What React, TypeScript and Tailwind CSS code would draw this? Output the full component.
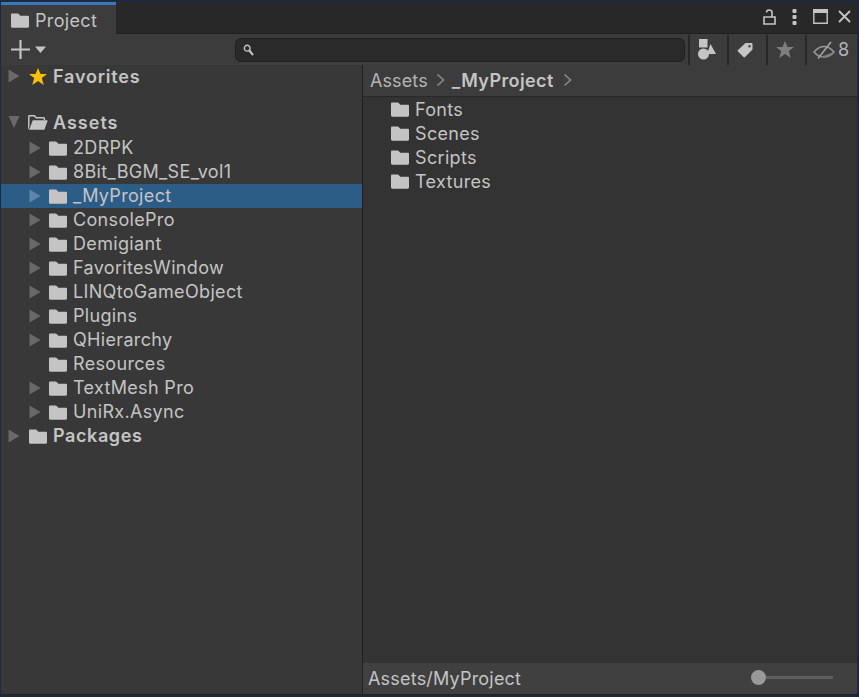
import { ReactNode } from "react"

const FolderIcon = ({ className = "" }: { className?: string }) => (
  <svg viewBox="0 0 18 15" className={`h-[15px] w-[18px] shrink-0 ${className}`}>
    <path
      d="M1.200 0.500H6.600C7.200 0.500 7.600 0.800 8 1.300L9.200 2.800H16.800C17.500 2.800 18 3.300 18 4V13.600C18 14.300 17.500 14.800 16.800 14.800H1.200C0.500 14.800 0 14.300 0 13.600V1.700C0 1 0.500 0.500 1.200 0.500Z"
      fill="#c4c4c4"
    />
  </svg>
)

const OpenFolderIcon = () => (
  <svg viewBox="0 0 20 15" className="h-[15px] w-[20px] shrink-0">
    <path
      d="M0.800 14V1.600C0.800 1 1.200 0.700 1.700 0.700H6.400L8.200 2.700H15.500C16 2.700 16.400 3 16.400 3.600V5"
      fill="none"
      stroke="#c4c4c4"
      strokeWidth="1.500"
    />
    <path d="M4.400 5.200H19.800L16.400 14.800H0.800Z" fill="#c4c4c4" />
    <path d="M1 14L4.400 5.200" stroke="#383838" strokeWidth="0.800" />
  </svg>
)

const Arrow = ({ down = false, selected = false }: { down?: boolean; selected?: boolean }) => (
  <svg viewBox="0 0 12 14" className="h-[14px] w-[12px] shrink-0">
    {down ? (
      <path d="M0.500 1H11.500L6 13Z" fill="#696969" />
    ) : (
      <path d="M0.500 0.500L11.500 7L0.500 13.500Z" fill={selected ? "#5f86a8" : "#696969"} />
    )}
  </svg>
)

const Chevron = () => (
  <svg viewBox="0 0 10 14" className="h-[14px] w-[10px] shrink-0">
    <path d="M1.500 1.500L7.500 7L1.500 12.500" fill="none" stroke="#8a8a8a" strokeWidth="1.600" />
  </svg>
)

const ToolButton = ({ children, className = "" }: { children: ReactNode; className?: string }) => (
  <div className={`flex h-[30px] items-center border-l-2 border-[#282828] ${className}`}>
    {children}
  </div>
)

const children = [
  { name: "2DRPK", arrow: true },
  { name: "8Bit_BGM_SE_vol1", arrow: true },
  { name: "_MyProject", arrow: true, selected: true },
  { name: "ConsolePro", arrow: true },
  { name: "Demigiant", arrow: true },
  { name: "FavoritesWindow", arrow: true },
  { name: "LINQtoGameObject", arrow: true },
  { name: "Plugins", arrow: true },
  { name: "QHierarchy", arrow: true },
  { name: "Resources", arrow: false },
  { name: "TextMesh Pro", arrow: true },
  { name: "UniRx.Async", arrow: true }
]

export default function App() {
  return (
    <div
      className="flex h-[697px] w-[859px] flex-col overflow-hidden bg-[#1c2a40] pt-[2px] pr-[2px] pb-[2px] pl-[1px] text-[18px] tracking-[0.33px] text-[#c4c4c4]"
      style={{ fontFamily: "Inter, sans-serif" }}>
      {/* Tab strip */}
      <div className="flex h-[32px] shrink-0 items-stretch justify-between border-b border-[#1f1f1f] bg-[#282828]">
        <div className="-mb-px flex w-[115px] items-center gap-[6px] border-t-[3px] border-[#3c78bd] bg-[#3c3c3c] pt-[2px] pl-[10px]">
          <FolderIcon />
          <span className="leading-none">Project</span>
        </div>
        <div className="flex items-center pr-[6px] pb-[2px]">
          <svg viewBox="0 0 13 16" className="h-[16px] w-[13px]">
            <path d="M1 8H12V15H1Z" fill="none" stroke="#c4c4c4" strokeWidth="1.600" />
            <path d="M3.500 3.500C3.500 1.800 4.800 1 6.200 1C7.700 1 9 1.800 9 3.500V8" fill="none" stroke="#c4c4c4" strokeWidth="1.600" />
          </svg>
          <svg viewBox="0 0 5 16" className="ml-[16px] h-[16px] w-[5px]">
            <rect x="0.500" y="0" width="4" height="4" rx="1" fill="#c4c4c4" />
            <rect x="0.500" y="6" width="4" height="4" rx="1" fill="#c4c4c4" />
            <rect x="0.500" y="12" width="4" height="4" rx="1" fill="#c4c4c4" />
          </svg>
          <svg viewBox="0 0 15 15" className="ml-[16px] h-[15px] w-[15px]">
            <path d="M0.800 0.800H14.200V14.200H0.800Z" fill="none" stroke="#c4c4c4" strokeWidth="1.400" />
            <rect x="0" y="0" width="15" height="4" fill="#c4c4c4" />
          </svg>
          <svg viewBox="0 0 13 13" className="ml-[10px] h-[13px] w-[13px]">
            <path d="M1 1L12 12M12 1L1 12" fill="none" stroke="#c4c4c4" strokeWidth="1.800" />
          </svg>
        </div>
      </div>

      {/* Toolbar */}
      <div className="flex h-[31px] shrink-0 items-center bg-[#3c3c3c]">
        <div className="flex w-[234px] items-center gap-[5px] pl-[10px]">
          <svg viewBox="0 0 19 19" className="h-[19px] w-[19px]">
            <path d="M9.500 0V19M0 9.500H19" stroke="#c4c4c4" strokeWidth="2.200" />
          </svg>
          <svg viewBox="0 0 11 7" className="h-[7px] w-[11px]">
            <path d="M0 0.500H11L5.500 7Z" fill="#c4c4c4" />
          </svg>
        </div>
        <div className="flex h-[24px] w-[451px] items-center rounded-[6px] border border-[#212121] bg-[#2a2a2a] pl-[7px]">
          <svg viewBox="0 0 11 12" className="h-[12px] w-[11px]">
            <circle cx="4.200" cy="4.200" r="2.900" fill="none" stroke="#c4c4c4" strokeWidth="1.400" />
            <path d="M6.300 6.500L10 11" stroke="#c4c4c4" strokeWidth="2" />
          </svg>
        </div>
        <ToolButton className="ml-[3px] w-[39px] pl-[8px]">
          <svg viewBox="0 0 18 21" className="h-[21px] w-[18px]">
            <rect x="1" y="0" width="8.500" height="8.500" fill="#c4c4c4" />
            <path d="M12.500 5L18 15H10L9.500 13.500Z" fill="#c4c4c4" />
            <circle cx="5.500" cy="15" r="5.500" fill="#c4c4c4" />
          </svg>
        </ToolButton>
        <ToolButton className="w-[39px] pl-[8px]">
          <svg viewBox="0 0 16 16" className="h-[16px] w-[16px]">
            <path
              fillRule="evenodd"
              d="M8.500 1H14.500C15 1 15.500 1.500 15.500 2V7.500L8 15C7.500 15.500 7 15.500 6.500 15L1 9.500C0.500 9 0.500 8.500 1 8ZM12.500 3A1.200 1.200 0 1 0 12.500 5.400A1.200 1.200 0 1 0 12.500 3Z"
              fill="#c4c4c4"
            />
          </svg>
        </ToolButton>
        <ToolButton className="w-[39px] pl-[8px]">
          <svg viewBox="0 0 18 17" className="h-[17px] w-[18px]">
            <path d="M9 0L11.500 6H18L12.800 10L14.700 17L9 13L3.300 17L5.200 10L0 6H6.500Z" fill="#7e7e7e" />
          </svg>
        </ToolButton>
        <ToolButton className="w-[52px] pl-[6px]">
          <svg viewBox="0 0 22 18" className="h-[18px] w-[22px]">
            <path d="M1 11C4 7.500 7 5.500 11 5.500C15 5.500 18 7.500 21 11C18 14.500 15 16 11 16C7 16 4 14.500 1 11Z" fill="none" stroke="#9a9a9a" strokeWidth="1.500" />
            <path d="M7 16L21 11C18 14.500 15 16 11 16Z" fill="#7a7a7a" />
            <path d="M5 17.500L18 1" stroke="#a4a4a4" strokeWidth="1.600" />
          </svg>
          <span className="ml-[3px] text-[#b4b4b4]">8</span>
        </ToolButton>
      </div>

      {/* Panels */}
      <div className="flex min-h-0 flex-1 border-b border-[#232323]">
        {/* Tree */}
        <div className="w-[362px] shrink-0 border-r border-[#202020] bg-[#383838]">
          <div className="flex h-[22px] items-center pl-[7px]">
            <Arrow />
            <svg viewBox="0 0 18 17" className="ml-[9px] h-[17px] w-[18px]">
              <path d="M9 0L11.500 6H18L12.800 10L14.700 17L9 13L3.300 17L5.200 10L0 6H6.500Z" fill="#ffc107" />
            </svg>
            <span className="ml-[6px] font-semibold tracking-[0.8px]">Favorites</span>
          </div>
          <div className="mt-[23px] mb-[2px] flex h-[24px] items-center pl-[7px]">
            <Arrow down />
            <div className="ml-[8px]">
              <OpenFolderIcon />
            </div>
            <span className="ml-[5px] font-semibold tracking-[1px]">Assets</span>
          </div>
          {children.map((item) => (
            <div
              key={item.name}
              className={`flex h-[24px] items-center pl-[28px] ${item.selected ? "bg-[#2c5d87]" : ""}`}>
              <div className="flex w-[12px]">{item.arrow && <Arrow selected={item.selected} />}</div>
              <FolderIcon className="ml-[8px]" />
              <span className="mb-[2px] ml-[6px]">{item.name}</span>
            </div>
          ))}
          <div className="flex h-[24px] items-center pl-[7px]">
            <Arrow />
            <FolderIcon className="ml-[9px]" />
            <span className="mb-[2px] ml-[6px] font-semibold tracking-[0.6px]">Packages</span>
          </div>
        </div>

        {/* Content */}
        <div className="flex min-w-0 flex-1 flex-col bg-[#333333]">
          <div className="flex h-[32px] shrink-0 items-center border-b border-[#282828] bg-[#3c3c3c] pb-[1px] pl-[7px]">
            <span className="tracking-[0.1px] text-[#b4b4b4]">Assets</span>
            <div className="ml-[8px]">
              <Chevron />
            </div>
            <span className="ml-[6px] font-semibold tracking-[0.4px]">_MyProject</span>
            <div className="ml-[9px]">
              <Chevron />
            </div>
          </div>
          <div className="flex-1 pl-[28px]">
            {["Fonts", "Scenes", "Scripts", "Textures"].map((name) => (
              <div key={name} className="flex h-[24px] items-center gap-[6px]">
                <FolderIcon />
                <span>{name}</span>
              </div>
            ))}
          </div>
          <div className="flex h-[31px] shrink-0 items-center justify-between bg-[#404040] pr-[24px] pl-[5px]">
            <span className="tracking-[0.2px]">Assets/MyProject</span>
            <div className="mb-[3px] flex items-center">
              <div className="h-[15px] w-[15px] rounded-full bg-[#999999]" />
              <div className="h-[3px] w-[67px] bg-[#5e5e5e]" />
            </div>
          </div>
        </div>
      </div>
    </div>
  )
}
